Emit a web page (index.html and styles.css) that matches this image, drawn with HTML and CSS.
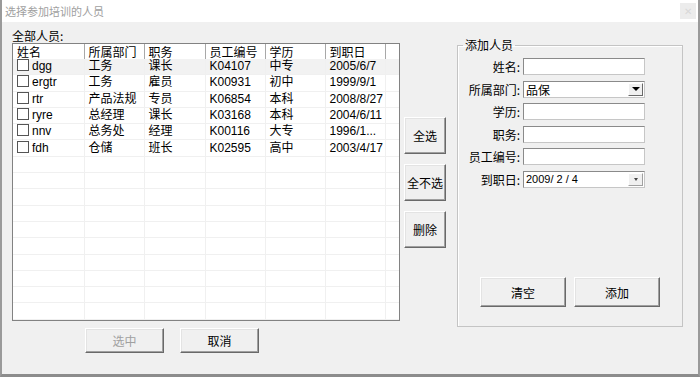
FILE: index.html
```html
<!DOCTYPE html>
<html lang="zh-CN">
<head>
  <meta charset="UTF-8" />
  <title>选择参加培训的人员</title>
  <link rel="stylesheet" href="styles.css">
</head>
<body>
  <div class="window">
    <div class="titlebar">
      <span class="title">选择参加培训的人员</span>
      <span class="close">✕</span>
    </div>

    <div class="client">
      <div class="col-list">
        <div class="caption">全部人员:</div>
        <div class="listview">
          <table class="grid">
            <colgroup>
              <col class="c-name"><col class="c-dept"><col class="c-job">
              <col class="c-no"><col class="c-edu"><col class="c-date"><col class="c-pad">
            </colgroup>
            <thead>
              <tr><th>姓名</th><th>所属部门</th><th>职务</th><th>员工编号</th><th>学历</th><th>到职日</th><th></th></tr>
            </thead>
            <tbody>
              <tr class="hot"><td><span class="check"></span>dgg</td><td>工务</td><td>课长</td><td>K04107</td><td>中专</td><td>2005/6/7</td><td></td></tr>
              <tr><td><span class="check"></span>ergtr</td><td>工务</td><td>雇员</td><td>K00931</td><td>初中</td><td>1999/9/1</td><td></td></tr>
              <tr><td><span class="check"></span>rtr</td><td>产品法规</td><td>专员</td><td>K06854</td><td>本科</td><td>2008/8/27</td><td></td></tr>
              <tr><td><span class="check"></span>ryre</td><td>总经理</td><td>课长</td><td>K03168</td><td>本科</td><td>2004/6/11</td><td></td></tr>
              <tr><td><span class="check"></span>nnv</td><td>总务处</td><td>经理</td><td>K00116</td><td>大专</td><td>1996/1...</td><td></td></tr>
              <tr><td><span class="check"></span>fdh</td><td>仓储</td><td>班长</td><td>K02595</td><td>高中</td><td>2003/4/17</td><td></td></tr>
              <tr><td></td><td></td><td></td><td></td><td></td><td></td><td></td></tr>
              <tr><td></td><td></td><td></td><td></td><td></td><td></td><td></td></tr>
              <tr><td></td><td></td><td></td><td></td><td></td><td></td><td></td></tr>
              <tr><td></td><td></td><td></td><td></td><td></td><td></td><td></td></tr>
              <tr><td></td><td></td><td></td><td></td><td></td><td></td><td></td></tr>
              <tr><td></td><td></td><td></td><td></td><td></td><td></td><td></td></tr>
              <tr><td></td><td></td><td></td><td></td><td></td><td></td><td></td></tr>
              <tr><td></td><td></td><td></td><td></td><td></td><td></td><td></td></tr>
              <tr><td></td><td></td><td></td><td></td><td></td><td></td><td></td></tr>
              <tr><td></td><td></td><td></td><td></td><td></td><td></td><td></td></tr>
              <tr><td></td><td></td><td></td><td></td><td></td><td></td><td></td></tr>
            </tbody>
          </table>
        </div>
        <div class="list-actions">
          <button class="btn btn-wide" disabled>选中</button>
          <button class="btn btn-wide">取消</button>
        </div>
      </div>

      <div class="col-tools">
        <button class="btn btn-tool">全选</button>
        <button class="btn btn-tool">全不选</button>
        <button class="btn btn-tool">删除</button>
      </div>

      <fieldset class="group">
        <legend>添加人员</legend>
        <div class="form">
          <label>姓名:</label>
          <div class="field"></div>

          <label>所属部门:</label>
          <div class="field combo">
            <span class="combo-text">品保</span>
            <span class="combo-btn"><span class="arrow"></span></span>
          </div>

          <label>学历:</label>
          <div class="field"></div>

          <label>职务:</label>
          <div class="field"></div>

          <label>员工编号:</label>
          <div class="field"></div>

          <label>到职日:</label>
          <div class="field combo">
            <span class="combo-text date">2009/ 2 / 4</span>
            <span class="combo-btn light"><span class="arrow small"></span></span>
          </div>
        </div>
        <div class="form-actions">
          <button class="btn btn-big">清空</button>
          <button class="btn btn-big">添加</button>
        </div>
      </fieldset>
    </div>
  </div>
</body>
</html>
```

FILE: styles.css
```css
body {
  margin: 0;
  font-family: "Noto Sans CJK SC", sans-serif;
  font-size: 12px;
  color: #000;
}

.window {
  width: 700px;
  height: 377px;
  box-sizing: border-box;
  background: #f0f0f0;
  border-left: 2px solid #9a9a9a;
  border-right: 2px solid #9a9a9a;
  border-bottom: 3px solid #8c8c8c;
  overflow: hidden;
}

.titlebar {
  height: 22px;
  background: #fff;
  display: flex;
  align-items: center;
  justify-content: space-between;
  padding: 0 2px 0 3px;
}
.title {
  color: #a0a0a0;
  font-size: 11px;
  line-height: 14px;
}
.close {
  width: 16px;
  height: 16px;
  background: #ececec;
  color: #d8d8d8;
  font-size: 10px;
  line-height: 16px;
  text-align: center;
}

.client {
  display: flex;
  align-items: flex-start;
  padding: 6px 0 0 10px;
}

/* list */
.col-list {
  width: 388px;
}
.caption {
  line-height: 15px;
}
.listview {
  height: 278px;
  box-sizing: border-box;
  background: #fff;
  border: 1px solid #828282;
  overflow: hidden;
}
.grid {
  table-layout: fixed;
  width: 386px;
  border-collapse: collapse;
}
.c-name { width: 71px; }
.c-dept { width: 60px; }
.c-job { width: 61px; }
.c-no { width: 60px; }
.c-edu { width: 60px; }
.c-date { width: 60px; }
.c-pad { width: 14px; }

.grid th {
  height: 15px;
  padding: 0 4px;
  font-weight: normal;
  text-align: left;
  line-height: 14px;
  white-space: nowrap;
  overflow: hidden;
  border-right: 1px solid #a8a8a8;
}
.grid th:last-child {
  border-right: 1px solid #e5e5e5;
}
.grid td {
  height: 15.3px;
  padding: 0 4px;
  line-height: 15px;
  white-space: nowrap;
  overflow: hidden;
  border-right: 1px solid #f0f0f0;
  border-bottom: 1px solid #f0f0f0;
  font-family: "Liberation Sans", "Noto Sans CJK SC", sans-serif;
}
.grid tr.hot td {
  background: #f2f2f2;
}
.check {
  display: inline-block;
  width: 10px;
  height: 10px;
  border: 1px solid #555;
  background: #fff;
  margin-right: 3px;
  vertical-align: -1px;
}

.list-actions {
  display: flex;
  gap: 16px;
  margin: 7px 0 0 73px;
}

/* buttons */
.btn {
  font-family: "Noto Sans CJK SC", sans-serif;
  font-size: 12px;
  color: #000;
  background: #f0f0f0;
  border: 1px solid;
  border-color: #fff #696969 #696969 #fff;
  box-shadow: inset -1px -1px 0 #a0a0a0, inset 1px 1px 0 #e3e3e3;
  padding: 0;
  margin: 0;
  box-sizing: border-box;
}
.btn:disabled {
  color: #a0a0a0;
}
.btn-wide {
  width: 79px;
  height: 25px;
}
.btn-tool {
  width: 42px;
  height: 37px;
}
.btn-big {
  width: 86px;
  height: 30px;
}

.col-tools {
  display: flex;
  flex-direction: column;
  gap: 10px;
  margin: 89px 0 0 4px;
}

/* group */
.group {
  width: 226px;
  height: 289px;
  box-sizing: border-box;
  margin: 10px 0 0 11px;
  padding: 6px 5px 19px 5px;
  border: 1px solid #c4c4c4;
  box-shadow: 1px 1px 0 #fff inset;
  display: flex;
  flex-direction: column;
}
.group legend {
  padding: 0 2px;
  line-height: 14px;
}
.form {
  display: grid;
  grid-template-columns: 57px 122px;
  column-gap: 3px;
  row-gap: 5.6px;
}
.form label {
  text-align: right;
  line-height: 17px;
}
.field {
  height: 17px;
  box-sizing: border-box;
  background: #fff;
  border: 1px solid #c6c6c6;
  border-top-color: #8a8a8a;
  border-left-color: #8a8a8a;
}
.combo {
  display: flex;
  align-items: center;
  justify-content: space-between;
}
.combo-text {
  padding-left: 2px;
  line-height: 15px;
}
.combo-text.date {
  font-family: "Liberation Sans", sans-serif;
  font-size: 11px;
}
.combo-btn {
  width: 15px;
  height: 13px;
  margin-right: 1px;
  box-sizing: border-box;
  background: #f0f0f0;
  border: 1px solid;
  border-color: #fff #696969 #696969 #fff;
  display: flex;
  align-items: center;
  justify-content: center;
}
.combo-btn.light {
  border-color: #fff #a0a0a0 #a0a0a0 #fff;
}
.arrow {
  width: 0;
  height: 0;
  border-left: 4px solid transparent;
  border-right: 4px solid transparent;
  border-top: 4px solid #000;
}
.arrow.small {
  border-left-width: 2px;
  border-right-width: 2px;
  border-top-width: 3px;
  border-top-color: #444;
}

.form-actions {
  display: flex;
  gap: 8px;
  margin: auto 0 0 17px;
}
```
